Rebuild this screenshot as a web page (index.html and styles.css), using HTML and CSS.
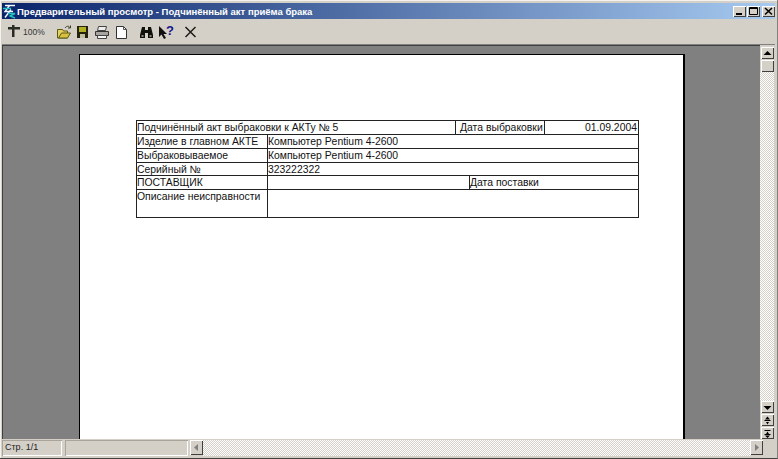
FILE: index.html
```html
<!DOCTYPE html>
<html lang="ru">
<head>
    <meta charset="UTF-8">
    <title>Предварительный просмотр</title>
    <link rel="stylesheet" href="styles.css">
</head>
<body>
    <div class="window">
        <div class="titlebar">
            <svg class="app-icon" width="15" height="16" viewBox="0 0 15 16">
                <path d="M3 2.500h10M7.500 2.500L3 8.500h8M9 6.500L3 14.500" fill="none" stroke="#f0f8ff" stroke-width="1.400"/>
                <path d="M1 5.500h8M6 10.500h7l-5 2.500 5 2" fill="none" stroke="#20c0c0" stroke-width="1.400"/>
            </svg>
            <span class="title-text">Предварительный просмотр - Подчинённый акт приёма брака</span>
            <div class="title-buttons">
                <div class="cap-btn"><svg width="13" height="11" viewBox="0 0 13 11"><path d="M3 7h6v2H3z" fill="#000"/></svg></div>
                <div class="cap-btn"><svg width="13" height="11" viewBox="0 0 13 11"><path d="M2.500 1.500h8v7h-8zM2.500 2.500h8" fill="none" stroke="#000"/></svg></div>
                <div class="cap-btn cap-close"><svg width="13" height="11" viewBox="0 0 13 11"><path d="M3 2l7 6.500M10 2l-7 6.500" fill="none" stroke="#000" stroke-width="1.600"/></svg></div>
            </div>
        </div>

        <div class="toolbar">
            <svg class="tool tool-zoom" width="12" height="16" viewBox="0 0 12 16"><path d="M0 3h12v2.500H0zM4 1h2.500v12H4z" fill="#2b2b26"/></svg>
            <span class="zoom-text">100%</span>
            <svg class="tool tool-open" width="16" height="16" viewBox="0 0 16 16">
                <path d="M1.500 5.500h5l1 1.500h4v7h-10z" fill="#e8d060" stroke="#5a5a10"/>
                <path d="M2.500 14l3-5h9l-3 5z" fill="#d8c040" stroke="#5a5a10"/>
                <path d="M9 4c1.500-2 3.500-2.500 5-.5M14.500 1.500v2.500H12" fill="none" stroke="#3c3c20"/>
            </svg>
            <svg class="tool tool-save" width="15" height="16" viewBox="0 0 15 16">
                <path d="M2 2h11v12H2z" fill="#24240c"/>
                <path d="M4 3h7v5H4z" fill="#b0b020"/>
                <path d="M5 10h5v4H5z" fill="#c0c0a0"/>
            </svg>
            <svg class="tool tool-print" width="16" height="16" viewBox="0 0 16 16">
                <path d="M4.500 2.500h8l-1 4h-8z" fill="#eee" stroke="#444"/>
                <path d="M1.500 7.500h13v4h-13z" fill="#a8a4a0" stroke="#333"/>
                <path d="M3.500 11.500h9v3h-9z" fill="#f4f4f4" stroke="#444"/>
            </svg>
            <svg class="tool tool-doc" width="13" height="16" viewBox="0 0 13 16">
                <path d="M1.500 2.500h7l3 3v9h-10z" fill="#fff" stroke="#333"/>
                <path d="M8.500 2.500v3h3" fill="none" stroke="#555"/>
            </svg>
            <svg class="tool tool-find" width="15" height="16" viewBox="0 0 15 16">
                <path d="M3 3h3v3h3V3h3l2 8v3H9V9H6v5H1v-3z" fill="#10100c"/>
                <path d="M2.500 11h2v2h-2zM10.500 11h2v2h-2z" fill="#8a8a80"/>
            </svg>
            <svg class="tool tool-help" width="17" height="16" viewBox="0 0 17 16">
                <path d="M1 2v11l2.500-2.500L6 15l2-1-2.500-4H9z" fill="#101010"/>
                <text x="8" y="11" class="help-mark">?</text>
            </svg>
            <svg class="tool tool-close" width="13" height="16" viewBox="0 0 13 16"><path d="M1.500 3l10 10M11.500 3l-10 10" fill="none" stroke="#1c1c18" stroke-width="1.500"/></svg>
        </div>

        <div class="main">
            <div class="viewer">
                <div class="sheet">
                    <div class="act">
                        <div class="act-row">
                            <div class="cell c-title">Подчинённый акт выбраковки к АКТу № 5</div>
                            <div class="cell c-label">Дата выбраковки</div>
                            <div class="cell c-date">01.09.2004</div>
                        </div>
                        <div class="act-row">
                            <div class="cell c-name">Изделие в главном АКТЕ</div>
                            <div class="cell c-value">Компьютер Pentium 4-2600</div>
                        </div>
                        <div class="act-row">
                            <div class="cell c-name">Выбраковываемое</div>
                            <div class="cell c-value">Компьютер Pentium 4-2600</div>
                        </div>
                        <div class="act-row act-row-short">
                            <div class="cell c-name">Серийный №</div>
                            <div class="cell c-value">323222322</div>
                        </div>
                        <div class="act-row">
                            <div class="cell c-name">ПОСТАВЩИК</div>
                            <div class="cell c-supplier"></div>
                            <div class="cell c-value">Дата поставки</div>
                        </div>
                        <div class="act-row act-row-tall">
                            <div class="cell c-name">Описание неисправности</div>
                            <div class="cell c-value"></div>
                        </div>
                    </div>
                </div>
            </div>
            <div class="vscroll">
                <div class="sb-btn"><svg width="13" height="11" viewBox="0 0 13 11"><path d="M6.500 3l4 4h-8z" fill="#000"/></svg></div>
                <div class="sb-btn sb-thumb"></div>
                <div class="sb-track"></div>
                <div class="sb-btn"><svg width="13" height="11" viewBox="0 0 13 11"><path d="M2.500 4h8l-4 4z" fill="#000"/></svg></div>
                <div class="sb-btn sb-page"><svg width="13" height="11" viewBox="0 0 13 11"><path d="M6.500 1.500l2.500 3H4zM3.500 5h6v1h-6zM5 7h3l-1.500 2.500z" fill="#000"/></svg></div>
                <div class="sb-btn sb-page"><svg width="13" height="11" viewBox="0 0 13 11"><path d="M3.500 2h6v1h-6zM5 6h3L6.500 3.500zM3.500 6h6v1h-6zM4 7.500h5l-2.500 2.500z" fill="#000"/></svg></div>
            </div>
        </div>

        <div class="bottom">
            <div class="panel panel-page">Стр. 1/1</div>
            <div class="panel panel-empty"></div>
            <div class="hscroll">
                <div class="sb-btn sb-h"><svg width="13" height="13" viewBox="0 0 13 13"><path d="M8 3v7L4 6.500z" fill="#808080"/></svg></div>
                <div class="sb-track"></div>
                <div class="sb-btn sb-h"><svg width="13" height="13" viewBox="0 0 13 13"><path d="M5 3v7l4-3.500z" fill="#808080"/></svg></div>
            </div>
        </div>
    </div>
</body>
</html>
```

FILE: styles.css
```css
html, body {
    margin: 0;
    padding: 0;
}

body {
    width: 778px;
    height: 459px;
    overflow: hidden;
    font-family: 'Liberation Sans', Arial, sans-serif;
    font-size: 11px;
    color: #000;
    background: #d4d0c8;
}

.window {
    box-sizing: border-box;
    width: 778px;
    height: 459px;
    padding: 3px 2px 2px 2px;
    display: flex;
    flex-direction: column;
    background: #d4d0c8;
    border-right: 1px solid #808080;
    border-bottom: 1px solid #404040;
    box-shadow: inset 1px 1px 0 #f4f2ee;
}

/* Title bar */
.titlebar {
    height: 16px;
    display: flex;
    align-items: center;
    flex: none;
    background: linear-gradient(to right, #0a246a, #a6caf0);
}

.app-icon {
    flex: none;
}

.title-text {
    color: #fff;
    font-weight: bold;
    font-size: 9.5px;
    white-space: nowrap;
}

.title-buttons {
    margin-left: auto;
    display: flex;
}

.cap-btn {
    width: 13px;
    height: 11px;
    margin-left: 1px;
    background: #d4d0c8;
    box-shadow: inset 1px 1px 0 #fff, inset -1px -1px 0 #404040;
    display: flex;
}

.cap-close {
    margin-left: 2px;
}

/* Toolbar */
.toolbar {
    height: 26px;
    flex: none;
    display: flex;
    align-items: center;
    padding: 1px 0 0 6px;
    border-bottom: 1px solid #808080;
    box-sizing: border-box;
}

.tool {
    flex: none;
}

.zoom-text {
    font-size: 8.5px;
    color: #333;
    margin-left: 3px;
    width: 33px;
}

.tool-save {
    margin-left: 3px;
}

.tool-print {
    margin-left: 4px;
}

.tool-doc {
    margin-left: 5px;
}

.tool-find {
    margin-left: 11px;
}

.tool-help {
    margin-left: 4px;
}

.tool-close {
    margin-left: 9px;
}

.help-mark {
    font-family: 'Liberation Sans', sans-serif;
    font-weight: bold;
    font-size: 13px;
    fill: #14148c;
}

/* Preview area */
.main {
    flex: 1;
    min-height: 0;
    display: flex;
    padding-bottom: 1px;
}

.viewer {
    flex: 1;
    min-width: 0;
    background: #808080;
    border-left: 1px solid #404040;
    border-top: 1px solid #404040;
    padding: 8px 0 0 76px;
    overflow: hidden;
    box-sizing: border-box;
}

.sheet {
    box-sizing: border-box;
    width: 606px;
    height: 500px;
    background: #fff;
    border: 1px solid #000;
    border-right-width: 2px;
    padding: 65px 0 0 56px;
}

/* Act table */
.act {
    width: 503px;
    border: 1px solid #222;
    box-sizing: border-box;
}

.act-row {
    display: flex;
    height: 14px;
    border-bottom: 1px solid #222;
    box-sizing: border-box;
}

.act-row-short {
    height: 13px;
}

.act-row-tall {
    height: 27px;
    border-bottom: none;
}

.cell {
    box-sizing: border-box;
    font-size: 10.4px;
    line-height: 13px;
    white-space: nowrap;
    overflow: hidden;
    color: #111;
}

.c-title {
    width: 319px;
    border-right: 1px solid #222;
}

.c-label {
    width: 89px;
    padding-left: 4px;
    border-right: 1px solid #222;
}

.c-date {
    flex: 1;
    text-align: right;
    padding-right: 1px;
}

.c-name {
    width: 131px;
    border-right: 1px solid #222;
}

.c-value {
    flex: 1;
}

.c-supplier {
    width: 202px;
    border-right: 1px solid #222;
}

/* Scrollbars */
.vscroll {
    width: 14px;
    flex: none;
    display: flex;
    flex-direction: column;
    padding-top: 2px;
    margin-right: 1px;
}

.sb-btn {
    flex: none;
    width: 13px;
    height: 12px;
    margin-left: 1px;
    background: #d4d0c8;
    box-shadow: inset 1px 1px 0 #fff, inset -1px -1px 0 #404040;
    display: flex;
    align-items: center;
    justify-content: center;
}

.sb-thumb {
    margin-top: 1px;
}

.sb-page {
    margin-top: 1px;
}

.sb-track {
    flex: 1;
    background: repeating-conic-gradient(#fff 0 25%, #d4d0c8 0 50%) 0 0 / 2px 2px;
}

/* Status bar */
.bottom {
    height: 16px;
    flex: none;
    display: flex;
}

.panel {
    box-sizing: border-box;
    height: 16px;
    line-height: 15px;
    font-size: 9px;
    padding-left: 3px;
    box-shadow: inset 1px 1px 0 #a8a49c, inset -1px -1px 0 #fff;
    color: #222;
}

.panel-page {
    width: 60px;
}

.panel-empty {
    width: 123px;
    margin-left: 3px;
}

.hscroll {
    flex: 1;
    display: flex;
    margin-left: 2px;
    margin-right: 12px;
}

.sb-h {
    width: 13px;
    height: 15px;
    margin-left: 0;
}
```
